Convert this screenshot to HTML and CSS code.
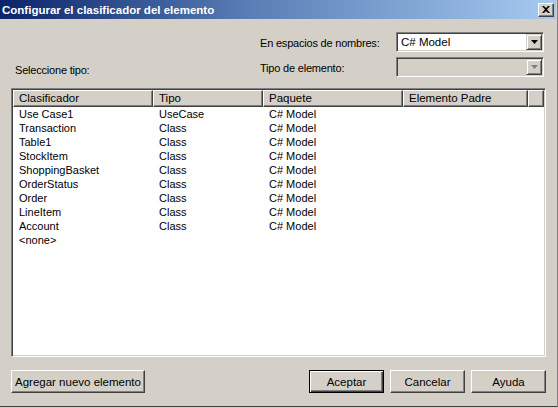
FILE: index.html
```html
<!DOCTYPE html>
<html>
<head>
<meta charset="utf-8">
<link rel="stylesheet" href="styles.css">
</head>
<body>
<div class="window">
  <div class="titlebar">
    <span class="title">Configurar el clasificador del elemento</span>
    <span class="close"><svg width="8" height="7" viewBox="0 0 8 7"><path d="M0 0h2l2 2 2-2h2L5 3.5 8 7H6L4 5 2 7H0l3-3.5z" fill="#000"/></svg></span>
  </div>
  <div class="content">
    <div class="form">
      <span class="spacer"></span>
      <label class="lbl">En espacios de nombres:</label>
      <div class="combo">
        <span class="combo-text">C# Model</span>
        <span class="combo-btn"><svg width="7" height="4" viewBox="0 0 7 4"><path d="M0 0h7L3.5 4z" fill="#000"/></svg></span>
      </div>
      <label class="lbl left">Seleccione tipo:</label>
      <label class="lbl">Tipo de elemento:</label>
      <div class="combo disabled">
        <span class="combo-text"></span>
        <span class="combo-btn"><svg width="7" height="4" viewBox="0 0 7 4"><path d="M0 0h7L3.5 4z" fill="#808080"/></svg></span>
      </div>
    </div>
    <div class="list">
      <div class="row header">
        <span class="hcell">Clasificador</span>
        <span class="hcell">Tipo</span>
        <span class="hcell">Paquete</span>
        <span class="hcell">Elemento Padre</span>
        <span class="hcell"></span>
      </div>
      <div class="row"><span>Use Case1</span><span>UseCase</span><span>C# Model</span><span></span></div>
      <div class="row"><span>Transaction</span><span>Class</span><span>C# Model</span><span></span></div>
      <div class="row"><span>Table1</span><span>Class</span><span>C# Model</span><span></span></div>
      <div class="row"><span>StockItem</span><span>Class</span><span>C# Model</span><span></span></div>
      <div class="row"><span>ShoppingBasket</span><span>Class</span><span>C# Model</span><span></span></div>
      <div class="row"><span>OrderStatus</span><span>Class</span><span>C# Model</span><span></span></div>
      <div class="row"><span>Order</span><span>Class</span><span>C# Model</span><span></span></div>
      <div class="row"><span>LineItem</span><span>Class</span><span>C# Model</span><span></span></div>
      <div class="row"><span>Account</span><span>Class</span><span>C# Model</span><span></span></div>
      <div class="row"><span>&lt;none&gt;</span><span></span><span></span><span></span></div>
    </div>
    <div class="buttons">
      <button class="btn wide">Agregar nuevo elemento</button>
      <span class="grow"></span>
      <button class="btn default">Aceptar</button>
      <button class="btn">Cancelar</button>
      <button class="btn">Ayuda</button>
    </div>
  </div>
</div>
</body>
</html>
```

FILE: styles.css
```css
html, body {
  margin: 0;
  padding: 0;
  background: #d4d0c8;
}
.window {
  width: 557px;
  height: 406px;
  background: #d4d0c8;
  border-right: 1px solid #808080;
  border-bottom: 1px solid #404040;
  font-family: "Liberation Sans", Arial, sans-serif;
  font-size: 11px;
  color: #000;
  display: flex;
  flex-direction: column;
  overflow: hidden;
}
.titlebar {
  height: 19px;
  width: 556px;
  background: linear-gradient(to right, #0a246a 0%, #5a7eb5 45%, #a6caf0 100%);
  display: flex;
  align-items: center;
  padding-left: 2px;
  box-sizing: border-box;
}
.title {
  color: #fff;
  font-weight: bold;
  font-size: 11.5px;
  flex: 1;
}
.close {
  width: 16px;
  height: 14px;
  margin-right: 2px;
  box-sizing: border-box;
  background: #d4d0c8;
  border-top: 1px solid #fff;
  border-left: 1px solid #fff;
  border-right: 1px solid #404040;
  border-bottom: 1px solid #404040;
  box-shadow: inset -1px -1px 0 #808080;
  display: flex;
  align-items: center;
  justify-content: center;
}
.content {
  padding: 13px 0 0 11px;
  display: flex;
  flex-direction: column;
}
.form {
  display: grid;
  grid-template-columns: 249px 136px 148px;
  grid-template-rows: 20px 20px;
  row-gap: 5px;
}
.lbl {
  align-self: center;
  padding-top: 1px;
  letter-spacing: -0.2px;
}
.lbl.left {
  padding-left: 4px;
  padding-top: 5px;
}
.combo {
  box-sizing: border-box;
  height: 20px;
  background: #fff;
  border-top: 1px solid #808080;
  border-left: 1px solid #808080;
  border-right: 1px solid #fff;
  border-bottom: 1px solid #fff;
  box-shadow: inset 1px 1px 0 #404040, inset -1px -1px 0 #d4d0c8;
  display: flex;
  align-items: stretch;
  padding: 1px;
}
.combo.disabled {
  background: #d4d0c8;
}
.combo-text {
  flex: 1;
  padding-left: 3px;
  line-height: 16px;
  font-size: 11.5px;
}
.combo-btn {
  width: 16px;
  box-sizing: border-box;
  background: #d4d0c8;
  border-top: 1px solid #d4d0c8;
  border-left: 1px solid #d4d0c8;
  border-right: 1px solid #404040;
  border-bottom: 1px solid #404040;
  box-shadow: inset 1px 1px 0 #fff, inset -1px -1px 0 #808080;
  display: flex;
  align-items: center;
  justify-content: center;
}
.list {
  margin-top: 11px;
  width: 535px;
  height: 269px;
  box-sizing: border-box;
  background: #fff;
  border-top: 1px solid #808080;
  border-left: 1px solid #808080;
  border-right: 1px solid #fff;
  border-bottom: 1px solid #fff;
  box-shadow: inset 1px 1px 0 #404040, inset -1px -1px 0 #d4d0c8;
  padding: 1px;
}
.row {
  display: grid;
  grid-template-columns: 140px 110px 140px 125px 1fr;
  height: 14px;
  line-height: 14px;
}
.row span {
  padding-left: 6px;
  white-space: nowrap;
}
.row.header {
  height: 17px;
  line-height: 15px;
}
.row.header .hcell {
  background: #d4d0c8;
  box-sizing: border-box;
  border-top: 1px solid #fff;
  border-left: 1px solid #fff;
  border-right: 1px solid #404040;
  border-bottom: 1px solid #404040;
  box-shadow: inset -1px -1px 0 #808080;
  padding-left: 5px;
  font-size: 11.5px;
}
.buttons {
  margin-top: 13px;
  width: 535px;
  display: flex;
  gap: 6px;
}
.grow {
  flex: 1;
}
.btn {
  font-family: "Liberation Sans", Arial, sans-serif;
  font-size: 11.5px;
  height: 23px;
  width: 75px;
  padding: 0;
  margin: 0;
  color: #000;
  background: #d4d0c8;
  box-sizing: border-box;
  border-top: 1px solid #fff;
  border-left: 1px solid #fff;
  border-right: 1px solid #404040;
  border-bottom: 1px solid #404040;
  box-shadow: inset -1px -1px 0 #808080;
}
.btn.wide {
  width: 134px;
}
.btn.default {
  border: 1px solid #000;
  box-shadow: inset 1px 1px 0 #fff, inset -1px -1px 0 #404040, inset -2px -2px 0 #808080;
}
```
